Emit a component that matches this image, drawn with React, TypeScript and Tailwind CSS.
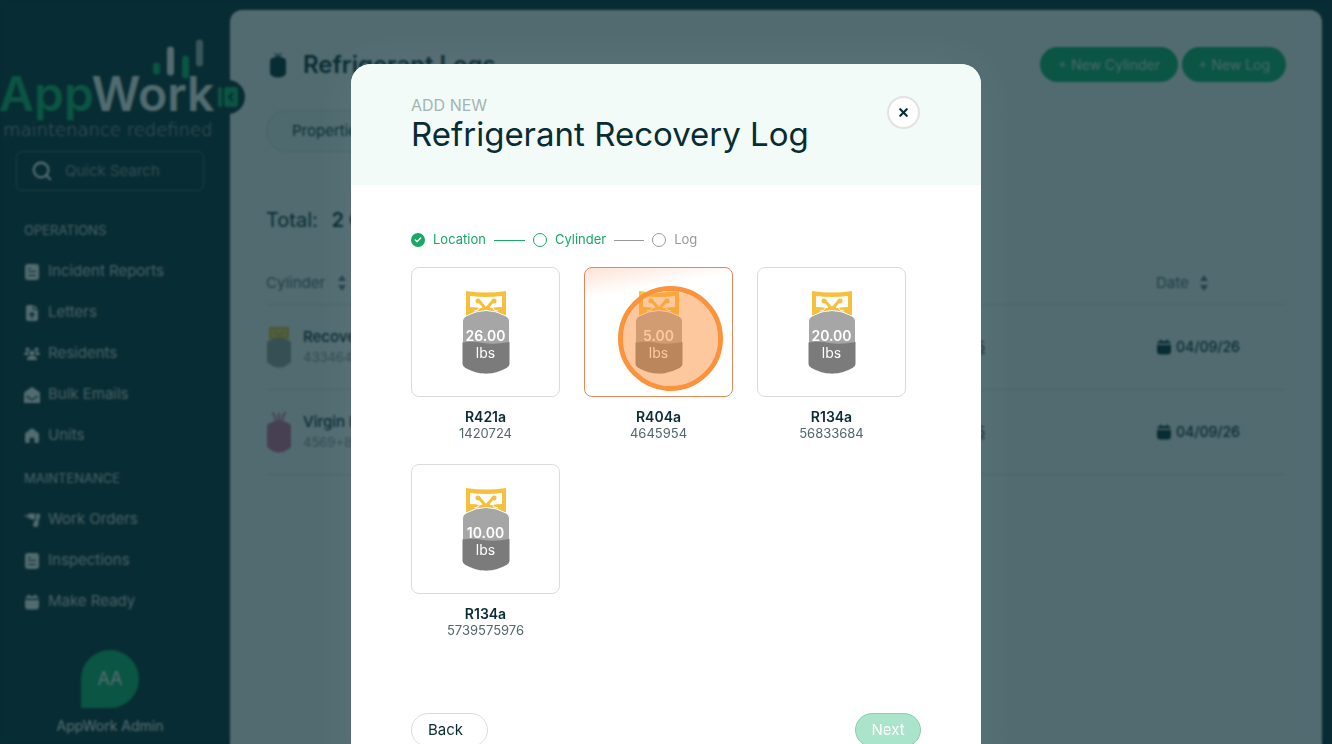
import type { ReactNode } from "react";
import { FaFileArrowUp } from "react-icons/fa6";
import { Check, Search, X } from "lucide-react";

function ReportIcon() {
  return (
    <svg viewBox="0 0 16 16" className="size-4">
      <path
        fill="currentColor"
        fillRule="evenodd"
        d="M4 0h8a3 3 0 0 1 3 3v10a3 3 0 0 1-3 3H4a3 3 0 0 1-3-3V3a3 3 0 0 1 3-3Zm0 4v1h3V4H4Zm0 3v1h8V7H4Zm0 4v1h8v-1H4Z"
      />
    </svg>
  );
}

function ResidentsIcon() {
  return (
    <svg viewBox="0 0 16 16" className="size-4" fill="currentColor">
      <circle cx="3.500" cy="3.500" r="2" />
      <circle cx="12.500" cy="3.500" r="2" />
      <circle cx="8" cy="7" r="2.500" />
      <path d="M0 9q0-3 3-3h1.500q-.5 2 .5 3H0ZM16 9q0-3-3-3h-1.500q.5 2-.5 3h5ZM3 14q0-4 3.500-4h3q3.500 0 3.500 4H3Z" />
    </svg>
  );
}

function MailIcon() {
  return (
    <svg viewBox="0 0 16 16" className="size-4">
      <path d="M0 6.500q0-1 1-1.700L7 .5q1-.6 2 0l6 4.300q1 .7 1 1.700V16H0V6.500Z" fill="currentColor" />
      <path d="m2.500 9 4 3q1.500 1 3 0l4-3" fill="none" stroke="#082c33" strokeWidth="1.500" />
    </svg>
  );
}

function HomeIcon() {
  return (
    <svg viewBox="0 0 16 16" className="size-4">
      <path
        d="M1 6.500q0-1 1-1.800L6.500 1Q8 0 9.500 1L14 4.700q1 .8 1 1.800V13q0 2-2 2h-2.500v-3.500q0-2-2.500-2t-2.500 2V15H3q-2 0-2-2V6.500Z"
        fill="currentColor"
      />
    </svg>
  );
}

function CalendarIcon() {
  return (
    <svg viewBox="0 0 16 16" className="size-4 shrink-0">
      <path
        fill="currentColor"
        d="M4 .5h1.500V2h5V.5H12V2a3 3 0 0 1 3 2.500H1A3 3 0 0 1 4 2V.5ZM1 6h14v6a3.500 3.500 0 0 1-3.500 3.500h-7A3.500 3.500 0 0 1 1 12V6Z"
      />
    </svg>
  );
}

function DrillIcon() {
  return (
    <svg viewBox="0 0 16 16" className="size-4" fill="currentColor">
      <path d="M0 3.500h3.500V2.500L6 1.500h5v6H8L6 6.500 3.500 5.500v-1H0v-1ZM12 2l3-.5 1 1v3L14.500 8v5l-1.500 2H10l-1-2 1.500-4.500H12V2Z" />
    </svg>
  );
}

function PanelIcon() {
  return (
    <svg viewBox="0 0 20 20" className="size-5">
      <rect x="0" y="0" width="4" height="20" rx="2" fill="#10b46c" />
      <rect x="6" y="0" width="14" height="20" rx="3" fill="#10b46c" />
      <path d="m15 6-4 4 4 4" fill="none" stroke="#082c33" strokeWidth="2" />
    </svg>
  );
}

function SortIcon() {
  return (
    <svg viewBox="0 0 10 16" className="h-4 w-[10px]" fill="currentColor">
      <path d="M5 0 9 6H1ZM5 16 1 10h8Z" />
    </svg>
  );
}

const operations: [string, ReactNode][] = [
  ["Incident Reports", <ReportIcon />],
  ["Letters", <FaFileArrowUp className="size-4" />],
  ["Residents", <ResidentsIcon />],
  ["Bulk Emails", <MailIcon />],
  ["Units", <HomeIcon />],
];

const maintenance: [string, ReactNode][] = [
  ["Work Orders", <DrillIcon />],
  ["Inspections", <ReportIcon />],
  ["Make Ready", <CalendarIcon />],
];

function NavSection({ title, items }: { title: string; items: [string, ReactNode][] }) {
  return (
    <section className="mb-[3px]">
      <h2 className="flex h-10 items-center text-[13px] text-white/80">{title}</h2>
      <ul>
        {items.map(([label, icon]) => (
          <li key={label}>
            <a href="#" className="flex h-[41px] items-center gap-2 text-[15px]">
              {icon}
              <span className="text-white/80">{label}</span>
            </a>
          </li>
        ))}
      </ul>
    </section>
  );
}

function Logo() {
  return (
    <div className="relative -ml-px pt-[66px]">
      <svg viewBox="0 0 52 42" className="absolute left-[153px] top-[38px] h-[42px] w-[52px]" strokeWidth="7" strokeLinecap="round">
        <path d="M4.500 28v5" stroke="#10b46c" />
        <path d="M18.500 12v22" stroke="#fff" />
        <path d="M33.500 21v16" stroke="#10b46c" />
        <path d="M47.500 5v20" stroke="#fff" strokeOpacity=".65" />
      </svg>
      <p className="text-5xl leading-[56px] font-semibold">
        <span className="text-[#10b46c]">App</span>Work
      </p>
      <p className="ml-1 font-['DejaVu_Sans',sans-serif] text-lg leading-4 font-extralight whitespace-nowrap text-white/70">
        maintenance redefined
      </p>
    </div>
  );
}

function Sidebar() {
  return (
    <aside className="relative z-10 flex w-[220px] shrink-0 flex-col text-white">
      <Logo />
      <button aria-label="Collapse sidebar" className="absolute left-[211px] top-20 flex size-[34px] items-center justify-center rounded-full bg-[#082c33]">
        <PanelIcon />
      </button>
      <label className="mx-4 mt-[13px] flex h-10 items-center gap-3 rounded-md border border-white/30 pl-[14px]">
        <Search size={22} strokeWidth={2.5} className="shrink-0" />
        <input type="search" aria-label="Quick Search" placeholder="Quick Search" className="w-full min-w-0 text-[15px] placeholder:text-white/50" />
      </label>
      <nav className="mt-5 px-6">
        <NavSection title="OPERATIONS" items={operations} />
        <NavSection title="MAINTENANCE" items={maintenance} />
      </nav>
      <div className="mt-[25px] flex flex-col items-center">
        <div className="flex size-[58px] items-center justify-center rounded-full rounded-bl-none bg-[#10b46c] text-lg">AA</div>
        <p className="mt-2 text-sm leading-5">AppWork Admin</p>
      </div>
    </aside>
  );
}

function TankIcon({ kind }: { kind: string }) {
  if (kind === "recovery") {
    return (
      <svg viewBox="0 0 24 42" className="h-[42px] w-6 shrink-0">
        <path d="M3 2h18v10H3Z" fill="#f6d66e" stroke="#efbd24" strokeWidth="2" />
        <path d="m7 5 5 5 5-5" fill="none" stroke="#efbd24" strokeWidth="2" />
        <path d="M0 16q12-8 24 0v20q-12 11-24 0Z" fill="#a0a0a0" />
      </svg>
    );
  }
  return (
    <svg viewBox="0 0 24 42" className="h-[42px] w-6 shrink-0">
      <path d="M5 2q3 0 4 9M12 2v9M19 2q-3 0-4 9" fill="none" stroke="#d66f9c" strokeWidth="2" />
      <path d="M0 14q12-9 24 0v22q-12 11-24 0Z" fill="#d66f9c" />
    </svg>
  );
}

const rows = [
  { kind: "recovery", name: "Recovery Cylinder", serial: "43346464", unit: "Unit 105", date: "04/09/26" },
  { kind: "virgin", name: "Virgin R410a", serial: "4569+874", unit: "Unit 105", date: "04/09/26" },
];

function LogsPage() {
  return (
    <main className="mt-[10px] mr-[10px] ml-[10px] grow rounded-t-xl bg-white px-9 pt-[37px] text-[#082c33]">
      <header className="flex h-[35px] items-center">
        <svg viewBox="0 0 16 26" className="mr-[17px] ml-1 h-[26px] w-4">
          <path d="M4 1q2 0 3 5M12 1Q10 1 9 6M8 1v5" fill="none" stroke="currentColor" />
          <path d="M0 9q0-2 2-3 6-3 12 0 2 1 2 3v12q0 2-2 3-6 3-12 0-2-1-2-3Z" fill="currentColor" />
        </svg>
        <h1 className="grow text-2xl font-semibold">Refrigerant Logs</h1>
        <div className="flex gap-1 text-sm text-white/80">
          <button className="h-[35px] rounded-full bg-[#10b46c] px-[18px]">+ New Cylinder</button>
          <button className="h-[35px] rounded-full bg-[#10b46c] px-4">+ New Log</button>
        </div>
      </header>
      <div className="mt-7 inline-flex h-[42px] rounded-full border border-[#cfe0da] bg-[#f2fbf7] px-[25px]">
        <button className="text-[15px]">Properties</button>
      </div>
      <p className="mt-[54px] text-xl leading-7">
        Total: <b className="ml-2 font-semibold">2 Cylinders</b>
      </p>
      <table className="mt-7 w-full table-fixed text-left">
        <thead>
          <tr className="h-[42px] border-b border-[#dbe1e2] text-[15px] text-[#5b7175]">
            <th className="font-normal">
              <span className="flex items-center gap-3">
                Cylinder <SortIcon />
              </span>
            </th>
            <th className="w-[281px] font-normal">Unit</th>
            <th className="w-[130px] font-normal">
              <span className="flex items-center gap-[10px]">
                Date <SortIcon />
              </span>
            </th>
          </tr>
        </thead>
        <tbody>
          {rows.map((row) => (
            <tr key={row.kind} className="h-[85px] border-b border-[#dbe1e2]">
              <td>
                <div className="flex items-center gap-3 pl-px">
                  <TankIcon kind={row.kind} />
                  <div>
                    <p className="text-[15px] leading-5 font-medium">{row.name}</p>
                    <p className="text-[13px] leading-5 text-[#8a9a9d]">{row.serial}</p>
                  </div>
                </div>
              </td>
              <td className="pr-[171px] text-right text-sm">
                <a href="#" className="underline">
                  {row.unit}
                </a>
              </td>
              <td>
                <span className="flex items-center gap-1 text-sm font-medium">
                  <CalendarIcon />
                  {row.date}
                </span>
              </td>
            </tr>
          ))}
        </tbody>
      </table>
    </main>
  );
}

const cylinders = [
  { weight: "26.00", name: "R421a", serial: "1420724" },
  { weight: "5.00", name: "R404a", serial: "4645954", selected: true },
  { weight: "20.00", name: "R134a", serial: "56833684" },
  { weight: "10.00", name: "R134a", serial: "5739575976" },
];

function Cylinder({ weight }: { weight: string }) {
  return (
    <span className="grid justify-items-center">
      <svg viewBox="0 0 48 83" className="col-start-1 row-start-1 h-[83px] w-12">
        <path d="M4 0q20 3 40 0v25q-20-9-40 0Z" fill="#f6c03c" />
        <path d="M8 5q16 2 32 0v11q-6 0-10 1H18q-4-1-10-1Z" fill="#fff" />
        <path d="m17 10 7 8 7-8" fill="none" stroke="#f6c03c" strokeWidth="3" />
        <path d="M20 20v-4h8v4Z" fill="#f6c03c" />
        <circle cx="16" cy="10" r="2.500" fill="#f6c03c" />
        <circle cx="32" cy="10" r="2.500" fill="#f6c03c" />
        <path d="M12 20q5 0 6-4M36 20q-5 0-6-4" fill="none" stroke="#fff" />
        <path d="M.5 30q0-3 3.500-5 20-11 40 0 3.500 2 3.500 5v43q0 2-3 4-20.500 12-41 0-3-2-3-4Z" fill="#a6a6a6" stroke="#fff" />
        <path d="M.5 51.500q10-1.500 21 .5t26-1v22q0 2-3 4-20.500 11-41 0-3-2-3-4Z" fill="#7b7b7b" />
      </svg>
      <span className="col-start-1 row-start-1 flex flex-col self-end pb-[13px] text-sm leading-[17px] text-white">
        <b className="font-semibold">{weight}</b>
        <span>lbs</span>
      </span>
    </span>
  );
}

function CylinderOption({ weight, name, serial, selected }: (typeof cylinders)[number]) {
  return (
    <li className="text-center">
      <button
        aria-label={`${name} ${serial}`}
        aria-pressed={!!selected}
        className={
          selected
            ? "relative flex h-[130px] w-full items-center justify-center rounded-lg border border-[#e08a5c] bg-[linear-gradient(170deg,#fde3d6_0%,#fff_20%)]"
            : "flex h-[130px] w-full items-center justify-center rounded-lg border border-[#d9dbdc]"
        }
      >
        <Cylinder weight={weight} />
        {selected && (
          <span className="absolute top-[18px] left-[33px] size-[105px] rounded-full border-[5px] border-[#fb923c] bg-[#fb923c]/50 bg-clip-padding" />
        )}
      </button>
      <p className="mt-3 text-sm leading-4 font-semibold">{name}</p>
      <p className="text-[13px] leading-4 text-[#52676b]">{serial}</p>
    </li>
  );
}

function Steps() {
  return (
    <ol className="flex h-[18px] items-center gap-2 text-[13px] text-[#1aa866]">
      <li className="flex items-center gap-2">
        <span className="flex size-[14px] items-center justify-center rounded-full bg-[#1aa866] text-white">
          <Check size={8} strokeWidth={4} />
        </span>
        Location
      </li>
      <li className="h-px w-[31px] bg-[#1aa866]" />
      <li className="flex items-center gap-2">
        <span className="size-[14px] rounded-full border border-[#1aa866]" />
        Cylinder
      </li>
      <li className="h-px w-[30px] bg-[#999]" />
      <li className="flex items-center gap-2 text-[#999]">
        <span className="size-[14px] rounded-full border border-[#999]" />
        Log
      </li>
    </ol>
  );
}

function RecoveryLogModal() {
  return (
    <div
      role="dialog"
      aria-labelledby="modal-title"
      className="mt-16 w-full max-w-[630px] shrink-0 self-start overflow-hidden rounded-[20px] bg-white text-[#082c33] shadow-[0_0_50px_rgba(255,255,255,0.06)]"
    >
      <header className="flex h-[121px] items-start justify-between bg-[#f2fbf7] pr-[61px] pl-[60px]">
        <div className="pt-8">
          <p className="text-base leading-[18px] text-[#a3b5b2]">ADD NEW</p>
          <h2 id="modal-title" className="text-[33px] leading-10">
            Refrigerant Recovery Log
          </h2>
        </div>
        <button aria-label="Close" className="mt-8 flex size-[33px] items-center justify-center rounded-full border-2 border-[#e2e2e2] bg-white">
          <X size={13} strokeWidth={4} />
        </button>
      </header>
      <div className="px-[60px] pt-[46px] pb-10">
        <Steps />
        <ul className="mt-[18px] grid grid-cols-3 gap-x-6 gap-y-[23px] pr-[15px]">
          {cylinders.map((c) => (
            <CylinderOption key={c.serial} {...c} />
          ))}
        </ul>
        <footer className="mt-[75px] flex justify-between text-[15px]">
          <button className="h-[34px] w-[77px] rounded-full border border-[#d9dbdc] pr-2">Back</button>
          <button disabled className="h-[34px] w-[66px] rounded-full border border-[#8ccfb2] bg-[#a9e4cb] text-white">
            Next
          </button>
        </footer>
      </div>
    </div>
  );
}

export default function App() {
  return (
    <div className="relative flex h-screen overflow-hidden bg-[#082c33] font-[Inter,sans-serif]">
      <Sidebar />
      <LogsPage />
      <div className="absolute inset-0 z-20 flex justify-center overflow-hidden bg-[#082c33]/70 backdrop-blur-[1px]">
        <RecoveryLogModal />
      </div>
    </div>
  );
}
